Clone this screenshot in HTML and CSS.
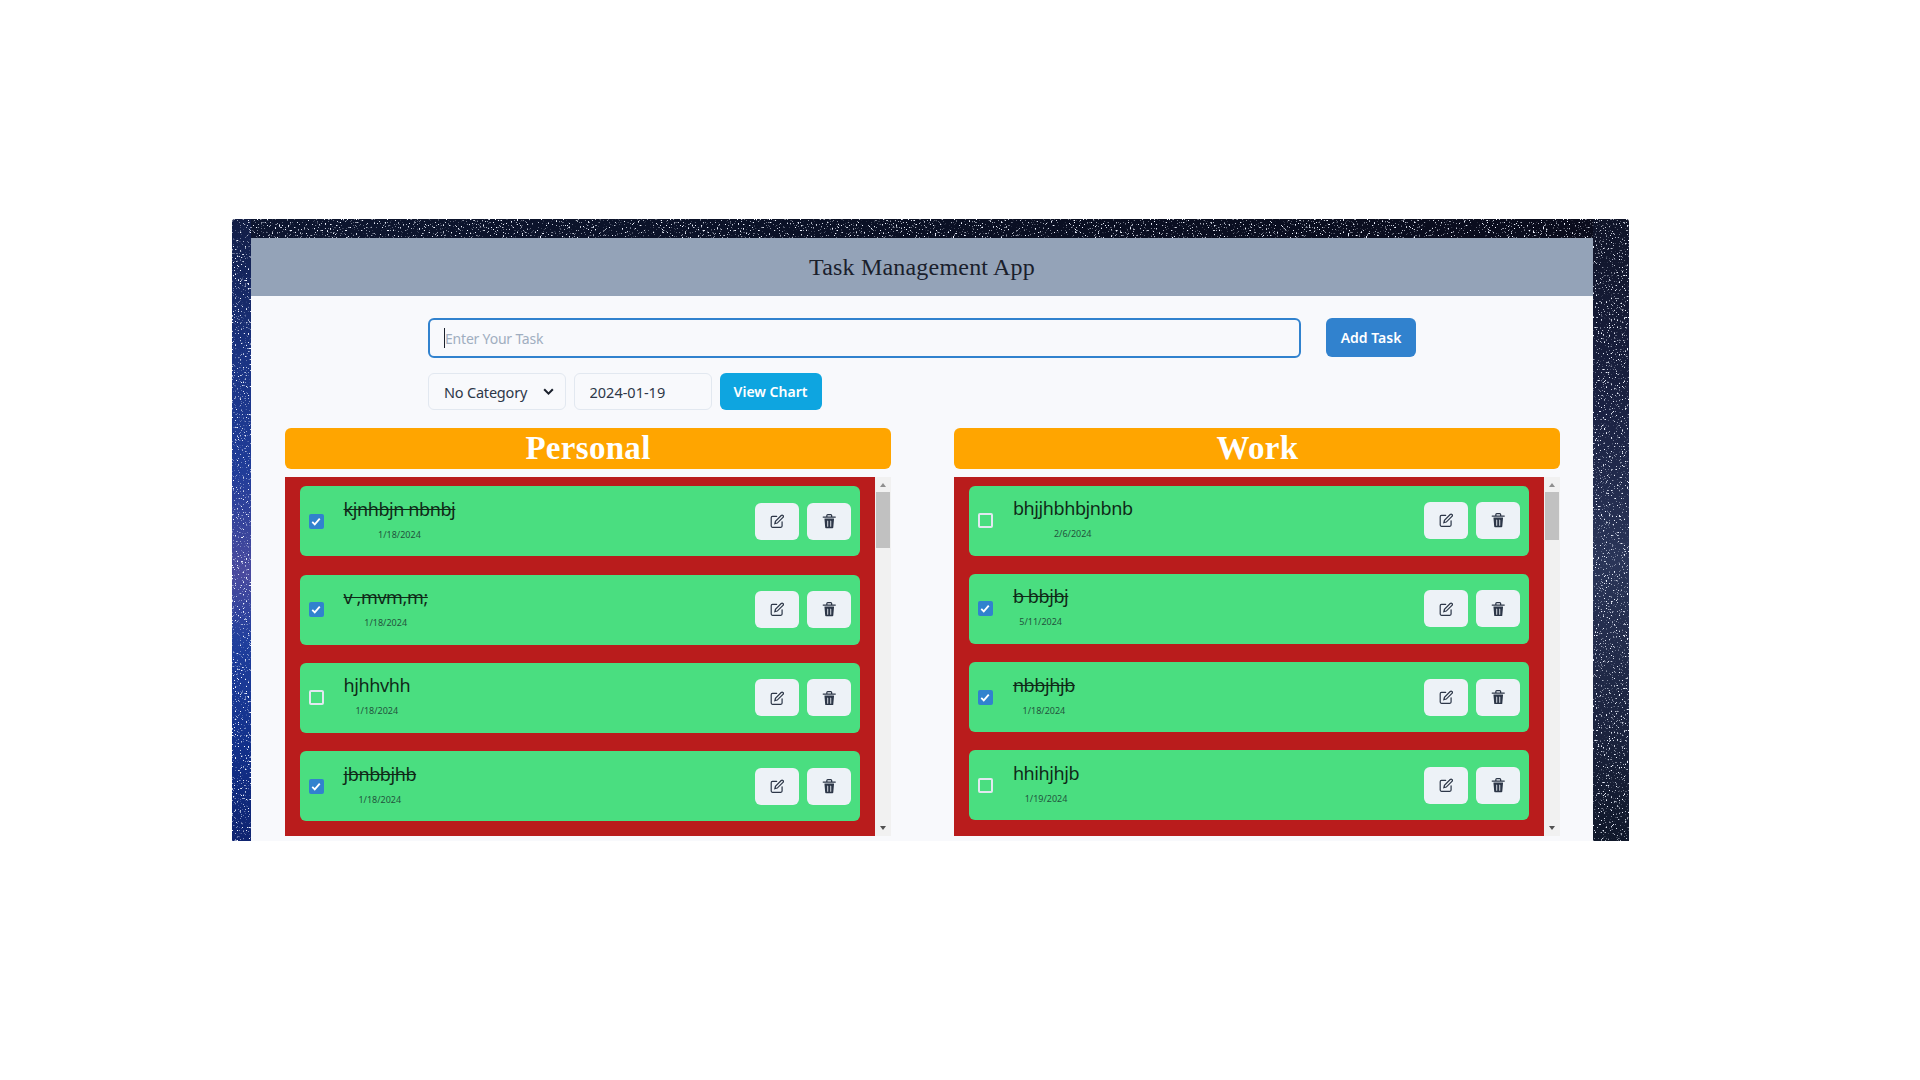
FILE: index.html
```html
<!DOCTYPE html>
<html lang="en">

<head>
    <meta charset="UTF-8">
    <meta name="viewport" content="width=device-width, initial-scale=1.0">
    <title>Task Management App</title>
    <link rel="stylesheet" href="styles.css">
</head>

<body>
    <!-- Icons used by every task row -->
    <svg class="icon-defs" aria-hidden="true">
        <symbol id="icon-edit" viewBox="0 0 24 24">
            <g fill="none" stroke="currentColor" stroke-linecap="round" stroke-width="2">
                <path d="M11 4H4a2 2 0 0 0-2 2v14a2 2 0 0 0 2 2h14a2 2 0 0 0 2-2v-7"></path>
                <path d="M18.5 2.5a2.121 2.121 0 0 1 3 3L12 15l-4 1 1-4 9.5-9.5z"></path>
            </g>
        </symbol>
        <symbol id="icon-trash" viewBox="0 0 24 24">
            <path fill="currentColor" d="M19.452 7.5H4.547a.5.5 0 00-.5.545l1.287 14.136A2 2 0 007.326 24h9.347a2 2 0 001.992-1.819L19.95 8.045a.5.5 0 00-.129-.382.5.5 0 00-.369-.163zm-9.2 13a.75.75 0 01-1.5 0v-9a.75.75 0 011.5 0zm5 0a.75.75 0 01-1.5 0v-9a.75.75 0 011.5 0zM22 4h-4.75a.25.25 0 01-.25-.25V2.5A2.5 2.5 0 0014.5 0h-5A2.5 2.5 0 007 2.5v1.25a.25.25 0 01-.25.25H2a1 1 0 000 2h20a1 1 0 000-2zM9 3.75V2.5a.5.5 0 01.5-.5h5a.5.5 0 01.5.5v1.25a.25.25 0 01-.25.25h-5.5A.25.25 0 019 3.75z"></path>
        </symbol>
        <symbol id="icon-check" viewBox="0 0 12 10">
            <path fill="none" stroke="currentColor" stroke-width="2.2" d="M1.5 5.5l3 3 6-7"></path>
        </symbol>
    </svg>

    <div class="frame">
        <!-- Starry backdrop -->
        <svg class="stars" aria-hidden="true">
            <filter id="star-noise" x="0" y="0" width="100%" height="100%">
                <feTurbulence type="fractalNoise" baseFrequency="0.62" numOctaves="2" seed="7"></feTurbulence>
                <feColorMatrix type="matrix" values="0 0 0 0 0.86  0 0 0 0 0.9  0 0 0 0 1  8 0 0 0 -5"></feColorMatrix>
            </filter>
            <rect width="100%" height="100%" filter="url(#star-noise)"></rect>
        </svg>

        <main class="panel">
            <header class="app-header">
                <h1>Task Management App</h1>
            </header>

            <div class="task-form">
                <div class="task-input">
                    <input type="text" placeholder="Enter Your Task">
                </div>
                <button class="btn btn-add">Add Task</button>
            </div>

            <div class="task-options">
                <div class="select-box">
                    <select>
                        <option>No Category</option>
                        <option>Personal</option>
                        <option>Work</option>
                    </select>
                    <svg viewBox="0 0 12 12"><path d="M2 4l4 4 4-4" fill="none" stroke="currentColor" stroke-width="1.9"></path></svg>
                </div>
                <input class="date-input" type="text" value="2024-01-19">
                <button class="btn btn-chart">View Chart</button>
            </div>

            <div class="columns">
                <section class="column">
                    <h2>Personal</h2>
                    <div class="list-wrap">
                        <div class="task-list task-list-personal">
                            <div class="task">
                                <span class="check checked"><svg><use href="#icon-check"></use></svg></span>
                                <div class="task-text">
                                    <span class="task-name done">kjnhbjn nbnbj</span>
                                    <span class="task-date">1/18/2024</span>
                                </div>
                                <button class="icon-btn"><svg><use href="#icon-edit"></use></svg></button>
                                <button class="icon-btn"><svg><use href="#icon-trash"></use></svg></button>
                            </div>
                            <div class="task">
                                <span class="check checked"><svg><use href="#icon-check"></use></svg></span>
                                <div class="task-text">
                                    <span class="task-name done">v ,mvm,m;</span>
                                    <span class="task-date">1/18/2024</span>
                                </div>
                                <button class="icon-btn"><svg><use href="#icon-edit"></use></svg></button>
                                <button class="icon-btn"><svg><use href="#icon-trash"></use></svg></button>
                            </div>
                            <div class="task">
                                <span class="check"></span>
                                <div class="task-text">
                                    <span class="task-name">hjhhvhh</span>
                                    <span class="task-date">1/18/2024</span>
                                </div>
                                <button class="icon-btn"><svg><use href="#icon-edit"></use></svg></button>
                                <button class="icon-btn"><svg><use href="#icon-trash"></use></svg></button>
                            </div>
                            <div class="task">
                                <span class="check checked"><svg><use href="#icon-check"></use></svg></span>
                                <div class="task-text">
                                    <span class="task-name done">jbnbbjhb</span>
                                    <span class="task-date">1/18/2024</span>
                                </div>
                                <button class="icon-btn"><svg><use href="#icon-edit"></use></svg></button>
                                <button class="icon-btn"><svg><use href="#icon-trash"></use></svg></button>
                            </div>
                        </div>
                        <div class="scrollbar">
                            <span class="arrow-up"></span>
                            <span class="thumb thumb-personal"></span>
                            <span class="arrow-down"></span>
                        </div>
                    </div>
                </section>

                <section class="column">
                    <h2>Work</h2>
                    <div class="list-wrap">
                        <div class="task-list">
                            <div class="task">
                                <span class="check"></span>
                                <div class="task-text">
                                    <span class="task-name">bhjjhbhbjnbnb</span>
                                    <span class="task-date">2/6/2024</span>
                                </div>
                                <button class="icon-btn"><svg><use href="#icon-edit"></use></svg></button>
                                <button class="icon-btn"><svg><use href="#icon-trash"></use></svg></button>
                            </div>
                            <div class="task">
                                <span class="check checked"><svg><use href="#icon-check"></use></svg></span>
                                <div class="task-text">
                                    <span class="task-name done">b bbjbj</span>
                                    <span class="task-date">5/11/2024</span>
                                </div>
                                <button class="icon-btn"><svg><use href="#icon-edit"></use></svg></button>
                                <button class="icon-btn"><svg><use href="#icon-trash"></use></svg></button>
                            </div>
                            <div class="task">
                                <span class="check checked"><svg><use href="#icon-check"></use></svg></span>
                                <div class="task-text">
                                    <span class="task-name done">nbbjhjb</span>
                                    <span class="task-date">1/18/2024</span>
                                </div>
                                <button class="icon-btn"><svg><use href="#icon-edit"></use></svg></button>
                                <button class="icon-btn"><svg><use href="#icon-trash"></use></svg></button>
                            </div>
                            <div class="task">
                                <span class="check"></span>
                                <div class="task-text">
                                    <span class="task-name">hhihjhjb</span>
                                    <span class="task-date">1/19/2024</span>
                                </div>
                                <button class="icon-btn"><svg><use href="#icon-edit"></use></svg></button>
                                <button class="icon-btn"><svg><use href="#icon-trash"></use></svg></button>
                            </div>
                        </div>
                        <div class="scrollbar">
                            <span class="arrow-up"></span>
                            <span class="thumb thumb-work"></span>
                            <span class="arrow-down"></span>
                        </div>
                    </div>
                </section>
            </div>
        </main>
    </div>
</body>

</html>
```

FILE: styles.css
```css
* {
    box-sizing: border-box;
}

body {
    margin: 0;
    background-color: #fff;
    font-family: "Noto Sans", sans-serif;
    color: #1a202c;
}

.icon-defs {
    display: none;
}

.frame {
    position: relative;
    width: 1397px;
    height: 622px;
    margin: 219px 0 0 232px;
    padding: 19px 36px 0 19px;
    overflow: hidden;
    border-radius: 3px 3px 0 0;
    background-color: #0a1022;
    background-image:
        linear-gradient(180deg, #121d44 0%, #1a3382 22%, #1f3c98 40%, #4a4a9e 57%, #1f3e9c 68%, #12308a 85%, #0f2470 100%),
        linear-gradient(180deg, #0f1428 0%, #1a2142 30%, #2a3558 55%, #1c2440 80%, #10182a 100%),
        linear-gradient(90deg, #0d1630 0%, #0a1024 50%, #0a0c1c 100%);
    background-size: 19px 100%, 36px 100%, 100% 19px;
    background-position: left top, right top, left top;
    background-repeat: no-repeat;
}

.stars {
    position: absolute;
    top: 0;
    left: 0;
    width: 100%;
    height: 100%;
}

.panel {
    position: relative;
    height: 603px;
    background-color: #f8f9fc;
}

.app-header {
    height: 58px;
    display: flex;
    align-items: center;
    justify-content: center;
    background-color: #94a3b8;
}

.app-header h1 {
    margin: 0;
    font-family: "Liberation Serif", serif;
    font-size: 24px;
    font-weight: 400;
    letter-spacing: 0.2px;
    color: #1a202c;
}

.task-form {
    display: flex;
    gap: 25px;
    margin-top: 22px;
    padding-left: 177px;
}

.task-input {
    position: relative;
    width: 873px;
}

/* caret in the focused field */
.task-input::before {
    content: "";
    position: absolute;
    left: 16px;
    top: 10px;
    width: 1px;
    height: 20px;
    background-color: #1a202c;
}

.task-input input {
    width: 100%;
    height: 40px;
    padding: 0 15px;
    border: 2px solid #3182ce;
    border-radius: 6px;
    background: transparent;
    font-family: inherit;
    font-size: 14px;
    letter-spacing: -0.2px;
    outline: none;
}

.task-input input::placeholder {
    color: #a0aec0;
}

.btn {
    border: none;
    border-radius: 6px;
    color: #fff;
    font-family: inherit;
    font-size: 14px;
    font-weight: 600;
}

.btn-add {
    width: 90px;
    height: 39px;
    background-color: #3182ce;
}

.btn-chart {
    width: 102px;
    height: 37px;
    background-color: #0ea5e0;
}

.task-options {
    display: flex;
    gap: 8px;
    margin-top: 15px;
    padding-left: 177px;
}

.select-box {
    position: relative;
    width: 137.5px;
    height: 37px;
}

.select-box select {
    width: 100%;
    height: 100%;
    padding: 0 15px;
    border: 1px solid #e2e8f0;
    border-radius: 6px;
    background: transparent;
    font-family: inherit;
    font-size: 14.5px;
    letter-spacing: -0.2px;
    color: #2d3748;
    appearance: none;
}

.select-box svg {
    position: absolute;
    right: 11px;
    top: 12px;
    width: 13px;
    height: 13px;
    pointer-events: none;
}

.date-input {
    width: 138px;
    height: 37px;
    padding: 0 15px;
    border: 1px solid #e2e8f0;
    border-radius: 6px;
    background: transparent;
    font-family: inherit;
    font-size: 14.5px;
    color: #2d3748;
}

.columns {
    display: flex;
    gap: 63.4px;
    margin-top: 18px;
    padding-left: 34px;
}

.column {
    width: 606px;
}

.column h2 {
    height: 41px;
    margin: 0 0 8px 0;
    border-radius: 6px;
    background-color: #ffa500;
    color: #fff;
    font-family: "Liberation Serif", serif;
    font-size: 33px;
    font-weight: 700;
    letter-spacing: 0.3px;
    line-height: 41px;
    text-align: center;
}

.list-wrap {
    display: flex;
    height: 359px;
}

.task-list {
    flex: 1;
    padding: 8.6px 15px 0 15px;
    overflow: hidden;
    background-color: #b91c1c;
}

.task-list-personal {
    padding-top: 9.4px;
}

.task {
    display: flex;
    align-items: center;
    gap: 8px;
    height: 70px;
    margin-bottom: 18.3px;
    padding: 0 9px 0 8.5px;
    border-radius: 6px;
    background-color: #4ade80;
}

.check {
    flex-shrink: 0;
    display: flex;
    align-items: center;
    justify-content: center;
    width: 15px;
    height: 15px;
    border: 2px solid #e2e8f0;
    border-radius: 2px;
}

.check svg {
    width: 10px;
    height: 9px;
    color: #fff;
}

.check.checked {
    border-color: #3182ce;
    background-color: #3182ce;
}

.task-text {
    display: flex;
    flex-direction: column;
    align-items: center;
    margin-bottom: 5px;
    margin-left: 12px;
    margin-right: auto;
}

.task-name {
    font-size: 18px;
    letter-spacing: -0.4px;
    line-height: 27px;
    color: #0f2a18;
}

.task-name.done {
    text-decoration: line-through;
}

.task-date {
    margin-top: 5px;
    font-size: 9px;
    line-height: 14px;
    color: #22543d;
}

.icon-btn {
    flex-shrink: 0;
    display: flex;
    align-items: center;
    justify-content: center;
    width: 44px;
    height: 37px;
    padding: 0;
    border: none;
    border-radius: 6px;
    background-color: #edf2f7;
    color: #2d3748;
}

.icon-btn svg {
    width: 14.5px;
    height: 14.5px;
}

.scrollbar {
    position: relative;
    width: 16px;
    background-color: #f1f1f1;
}

.thumb {
    position: absolute;
    top: 15px;
    left: 1px;
    right: 1px;
    background-color: #c1c1c1;
}

.thumb-personal {
    height: 56px;
}

.thumb-work {
    height: 48px;
}

.arrow-up,
.arrow-down {
    position: absolute;
    left: 5px;
    width: 0;
    height: 0;
    border-left: 3px solid transparent;
    border-right: 3px solid transparent;
}

.arrow-up {
    top: 6px;
    border-bottom: 4px solid #8f8f8f;
}

.arrow-down {
    bottom: 6px;
    border-top: 4px solid #505050;
}
```
